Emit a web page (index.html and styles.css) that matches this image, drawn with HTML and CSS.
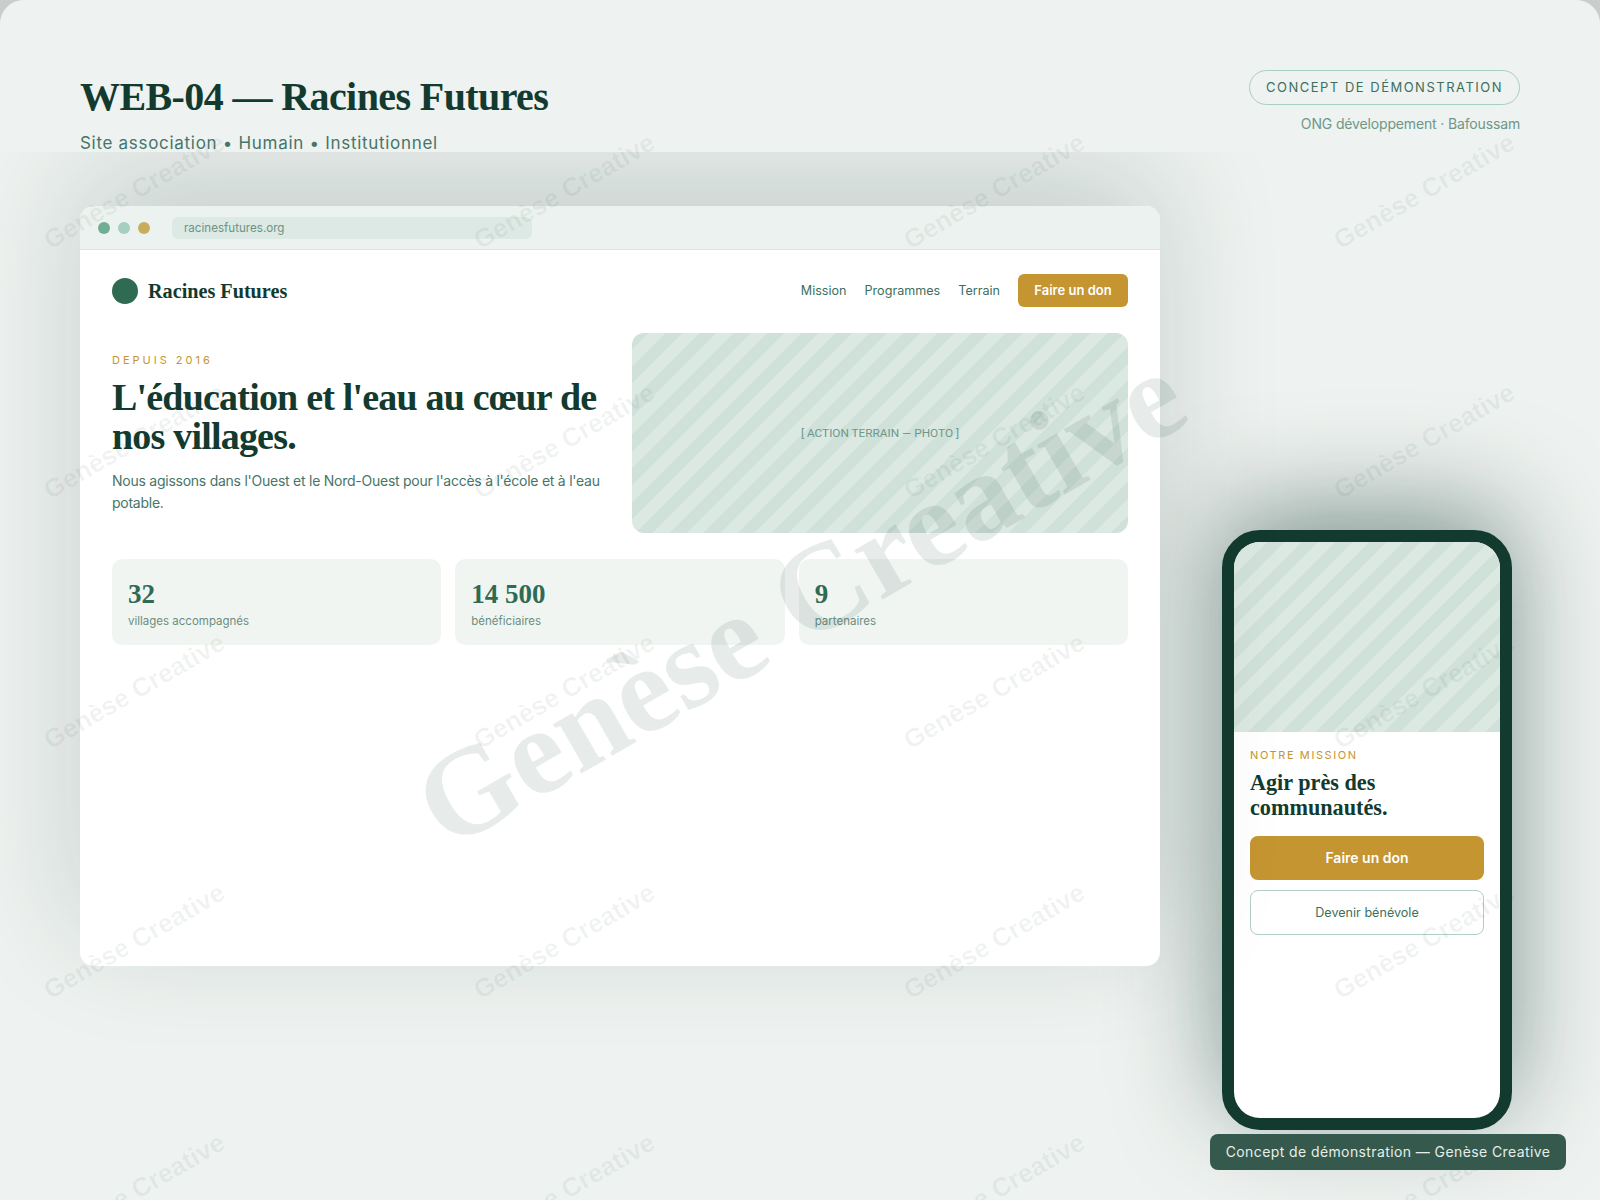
FILE: index.html
```html
<!DOCTYPE html>
<html lang="fr">
<head>
	<meta charset="UTF-8">
	<title>WEB-04 — Racines Futures</title>
	<link rel="stylesheet" href="styles.css">
</head>
<body>
<div class="stage">
	<header class="head">
		<div>
			<h1 class="head_title">WEB-04 — Racines Futures</h1>
			<p class="head_sub">Site association • Humain • Institutionnel</p>
		</div>
		<div class="head_right">
			<span class="pill">CONCEPT DE DÉMONSTRATION</span>
			<span class="head_client">ONG développement · Bafoussam</span>
		</div>
	</header>

	<main class="mockups">
		<section class="browser">
			<div class="browser_bar">
				<i class="dot dot_a"></i>
				<i class="dot dot_b"></i>
				<i class="dot dot_c"></i>
				<div class="url">racinesfutures.org</div>
			</div>
			<div class="site">
				<nav class="site_nav">
					<div class="brand"><i class="brand_mark"></i><span class="brand_name">Racines Futures</span></div>
					<div class="links">
						<a>Mission</a>
						<a>Programmes</a>
						<a>Terrain</a>
						<a class="btn_small">Faire un don</a>
					</div>
				</nav>
				<div class="hero">
					<div>
						<div class="eyebrow">DEPUIS 2016</div>
						<h2 class="hero_title">L'éducation et l'eau au cœur de nos villages.</h2>
						<p class="hero_text">Nous agissons dans l'Ouest et le Nord-Ouest pour l'accès à l'école et à l'eau potable.</p>
					</div>
					<div class="photo stripes">[ ACTION TERRAIN — PHOTO ]</div>
				</div>
				<div class="stats">
					<div class="stat"><div class="stat_num">32</div><div class="stat_label">villages accompagnés</div></div>
					<div class="stat"><div class="stat_num">14 500</div><div class="stat_label">bénéficiaires</div></div>
					<div class="stat"><div class="stat_num">9</div><div class="stat_label">partenaires</div></div>
				</div>
			</div>
		</section>

		<section class="phone">
			<div class="phone_screen">
				<div class="phone_photo stripes"></div>
				<div class="phone_body">
					<div class="phone_eyebrow">NOTRE MISSION</div>
					<h3 class="phone_title">Agir près des communautés.</h3>
					<a class="btn_gold">Faire un don</a>
					<a class="btn_line">Devenir bénévole</a>
				</div>
			</div>
		</section>
	</main>

	<div class="mark_big">Genèse Creative</div>
	<div class="marks" aria-hidden="true">
		<span>Genèse Creative</span><span>Genèse Creative</span><span>Genèse Creative</span><span>Genèse Creative</span>
		<span>Genèse Creative</span><span>Genèse Creative</span><span>Genèse Creative</span><span>Genèse Creative</span>
		<span>Genèse Creative</span><span>Genèse Creative</span><span>Genèse Creative</span><span>Genèse Creative</span>
		<span>Genèse Creative</span><span>Genèse Creative</span><span>Genèse Creative</span><span>Genèse Creative</span>
		<span>Genèse Creative</span><span>Genèse Creative</span><span>Genèse Creative</span><span>Genèse Creative</span>
	</div>

	<div class="badge">Concept de démonstration — Genèse Creative</div>
</div>
</body>
</html>
```

FILE: styles.css
```css
*{
	box-sizing:border-box;
}
html,body{
	margin:0;
	padding:0;
	background:#c9cdcb;
}
body{
	font-family:"Inter","Noto Sans",sans-serif;
	color:#123a2e;
}
h1,h2,h3,p{
	margin:0;
}

.stage{
	position:relative;
	width:1600px;
	height:1200px;
	background:#eef2f0;
	border-radius:24px 24px 0 0;
	overflow:hidden;
}

/* header sits on top of the browser shadow, that is why it has a background */
.head{
	position:relative;
	z-index:2;
	height:152px;
	padding:70px 80px 0;
	background:#eef2f0;
	border-radius:24px 24px 0 0;
	display:flex;
	justify-content:space-between;
}
.head_title{
	font-family:"Liberation Serif",serif;
	font-weight:700;
	font-size:40px;
	line-height:54px;
	letter-spacing:-0.6px;
}
.head_sub{
	margin-top:8px;
	font-size:17px;
	line-height:22px;
	letter-spacing:0.7px;
	color:#46756a;
}
.head_right{
	display:flex;
	flex-direction:column;
	align-items:flex-end;
}
.pill{
	height:35px;
	line-height:33px;
	padding:0 16px;
	border:1px solid #a9cfc2;
	border-radius:18px;
	font-size:13px;
	letter-spacing:1.5px;
	color:#3d6f5e;
}
.head_client{
	margin-top:9px;
	font-size:14px;
	line-height:20px;
	letter-spacing:-0.15px;
	color:#6f9788;
}

.mockups{
	height:924px;
	margin-top:54px;
	padding-left:80px;
	display:flex;
	gap:62px;
}

.browser{
	position:relative;
	z-index:1;
	width:1080px;
	height:760px;
	background:#fff;
	border-radius:14px;
	overflow:hidden;
	flex:none;
	box-shadow:0 -36px 120px rgba(18,58,46,0.18);
}
.browser_bar{
	height:44px;
	padding-left:18px;
	display:flex;
	align-items:center;
	gap:8px;
	background:#ecf2ef;
	border-bottom:1px solid #d9e3df;
}
.dot{
	width:12px;
	height:12px;
	border-radius:50%;
}
.dot_a{background:#6fae94;}
.dot_b{background:#a6cfc0;}
.dot_c{background:#c8ad5e;}
.url{
	width:360px;
	height:22px;
	margin-left:14px;
	padding-left:12px;
	border-radius:6px;
	background:#dde9e4;
	font-size:11.6px;
	line-height:22px;
	color:#6b9484;
}

.site{
	padding:24px 32px;
}
.site_nav{
	display:flex;
	justify-content:space-between;
	align-items:center;
	height:33px;
}
.brand{
	display:flex;
	align-items:center;
	gap:10px;
}
.brand_mark{
	width:26px;
	height:26px;
	border-radius:50%;
	background:#2f6b53;
}
.brand_name{
	font-family:"Liberation Serif",serif;
	font-weight:700;
	font-size:20.2px;
	padding-top:2px;
}
.links{
	display:flex;
	align-items:center;
	gap:18px;
	font-size:12.6px;
	color:#3d6f5e;
}
.btn_small{
	width:110px;
	height:33px;
	line-height:33px;
	text-align:center;
	border-radius:6px;
	background:#c49530;
	color:#fff;
	font-size:13px;
	font-weight:600;
}

.hero{
	margin-top:26px;
	display:grid;
	grid-template-columns:1fr 1fr;
	gap:24px;
}
.eyebrow{
	margin-top:19px;
	font-size:11px;
	line-height:16px;
	letter-spacing:3px;
	color:#c49530;
}
.hero_title{
	margin-top:10px;
	font-family:"Liberation Serif",serif;
	font-weight:700;
	font-size:38px;
	line-height:39px;
	letter-spacing:-0.8px;
}
.hero_text{
	margin-top:14px;
	font-size:14px;
	line-height:22px;
	letter-spacing:-0.25px;
	color:#46756a;
}
.stripes{
	background:repeating-linear-gradient(135deg,#d0e1d9 0,#d0e1d9 12px,#dce9e3 12px,#dce9e3 24px);
}
.photo{
	height:200px;
	border-radius:12px;
	display:flex;
	align-items:center;
	justify-content:center;
	font-family:"Roboto",sans-serif;
	font-size:11.8px;
	color:#6f9788;
}

.stats{
	margin-top:26px;
	display:grid;
	grid-template-columns:repeat(3,1fr);
	gap:14px;
}
.stat{
	height:86px;
	padding:18px 16px;
	border-radius:10px;
	background:#f0f5f2;
}
.stat_num{
	font-family:"Liberation Serif",serif;
	font-weight:700;
	font-size:27px;
	line-height:34px;
	color:#2f6b53;
}
.stat_label{
	margin-top:2px;
	font-size:11.5px;
	line-height:16px;
	color:#6b8f80;
}

.phone{
	width:290px;
	height:600px;
	align-self:flex-end;
	flex:none;
	border:12px solid #123a2e;
	border-radius:38px;
	background:#123a2e;
	box-shadow:0 -20px 100px rgba(18,58,46,0.5);
}
.phone_screen{
	height:100%;
	background:#fff;
	border-radius:26px;
	overflow:hidden;
}
.phone_photo{
	height:190px;
}
.phone_body{
	padding:15px 16px;
}
.phone_eyebrow{
	font-size:11px;
	line-height:16px;
	letter-spacing:1.6px;
	color:#c49530;
}
.phone_title{
	margin-top:7px;
	font-family:"Liberation Serif",serif;
	font-weight:700;
	font-size:22.2px;
	line-height:25px;
}
.btn_gold,.btn_line{
	display:block;
	height:44px;
	border-radius:8px;
	text-align:center;
	line-height:44px;
}
.btn_gold{
	margin-top:16px;
	background:#c49530;
	color:#fff;
	font-size:14px;
	font-weight:600;
}
.btn_line{
	margin-top:10px;
	height:45px;
	line-height:43px;
	border:1px solid #afcfc5;
	font-size:12.6px;
	color:#3d6f5e;
}

/* overlays */
.mark_big{
	position:absolute;
	left:50%;
	top:50%;
	transform:translate(-50%,-50%) rotate(-30deg);
	z-index:3;
	white-space:nowrap;
	font-family:"Liberation Serif",serif;
	font-weight:700;
	font-size:124px;
	color:rgba(18,58,46,0.1);
	pointer-events:none;
}
.marks{
	position:absolute;
	left:-81px;
	top:66px;
	z-index:3;
	display:grid;
	grid-template-columns:repeat(4,430px);
	grid-auto-rows:250px;
	pointer-events:none;
}
.marks span{
	display:flex;
	align-items:center;
	justify-content:center;
	transform:rotate(-30deg);
	font-family:"Liberation Sans",sans-serif;
	font-weight:700;
	font-size:26px;
	color:rgba(18,58,46,0.06);
	white-space:nowrap;
}
.badge{
	position:absolute;
	right:34px;
	bottom:30px;
	z-index:4;
	width:356px;
	height:36px;
	border-radius:8px;
	background:#35594c;
	text-align:center;
	font-size:14px;
	line-height:36px;
	letter-spacing:0.4px;
	color:#e6eeea;
}
```
